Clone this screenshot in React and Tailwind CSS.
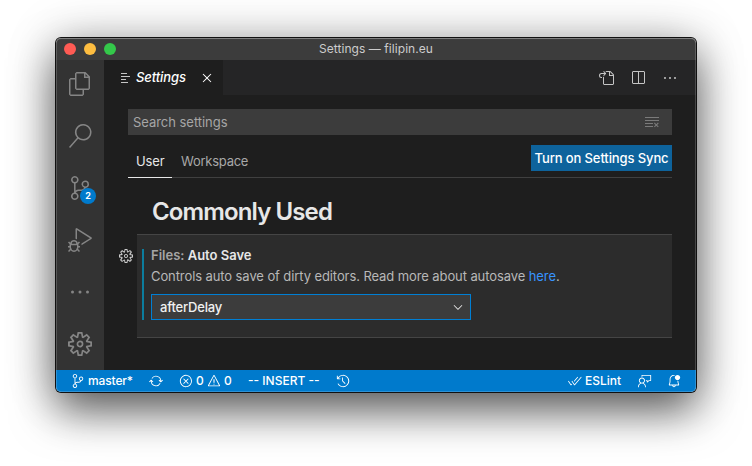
import {
  VscFiles, VscSearch, VscSourceControl, VscDebugAlt, VscEllipsis, VscSettingsGear, VscGear,
  VscSync, VscError, VscWarning, VscHistory, VscCheckAll, VscFeedback, VscBellDot,
  VscGoToFile, VscSplitHorizontal, VscClearAll, VscChevronDown, VscClose,
} from "react-icons/vsc";

function ActivityItem({ icon: Icon, badge }) {
  return (
    <div className="relative flex h-12 w-12 items-center justify-center text-[#858585]">
      <Icon size={24} />
      {badge && (
        <span className="absolute right-2 bottom-2 flex h-4 w-4 items-center justify-center rounded-full bg-[#007acc] text-[9px] font-bold text-white">
          {badge}
        </span>
      )}
    </div>
  );
}

function TitleBar() {
  return (
    <header className="relative flex h-[22px] items-center justify-center bg-[#3c3c3c]">
      <div className="absolute left-2 flex gap-2">
        <span className="h-3 w-3 rounded-full bg-[#ff5b54]" />
        <span className="h-3 w-3 rounded-full bg-[#fdbd40]" />
        <span className="h-3 w-3 rounded-full bg-[#34c84a]" />
      </div>
      <span className="text-[12px] tracking-[0.06px] text-[#cccccc]">Settings — filipin.eu</span>
    </header>
  );
}

function SettingsIcon() {
  return (
    <svg width="10" height="10" viewBox="0 0 10 10" className="text-[#c5c5c5]" stroke="currentColor">
      <path d="M0 .5h6M0 3.5h9M0 6.5h5M0 9.5h7" />
    </svg>
  );
}

function TabBar() {
  return (
    <div className="flex h-[35px] bg-[#252526]">
      <div className="flex w-[119px] items-center bg-[#1e1e1e] pl-[17px] text-white">
        <SettingsIcon />
        <span className="ml-[5px] w-[51px] text-[13px] font-medium tracking-[-0.1px] whitespace-nowrap italic">Settings</span>
        <VscClose size={16} className="ml-3" />
      </div>
      <div className="ml-auto flex items-center gap-4 pr-[18px] text-[#c5c5c5]">
        <VscGoToFile size={16} />
        <VscSplitHorizontal size={16} />
        <VscEllipsis size={16} />
      </div>
    </div>
  );
}

function Setting() {
  return (
    <div className="relative ml-[9px] h-[104px] border-y border-[#454545] bg-[#2c2c2c] pt-[14px] pl-[5px]">
      <VscGear size={16} className="absolute top-[13px] -left-[19px] text-[#cccccc]" />
      <div className="h-[71px] border-l-2 border-[#0c7d9d] pl-[7px] text-[13px]">
        <div className="h-[14px] leading-[12px] font-semibold text-[#a5a5a5]">
          Files: <span className="text-[#e7e7e7]">Auto Save</span>
        </div>
        <p className="mt-1 h-[18px] leading-[18px] tracking-[-0.095px] whitespace-nowrap text-[#b8b8b8]">
          Controls auto save of dirty editors. Read more about autosave <a className="text-[#3794ff]">here</a>.
        </p>
        <div className="mt-[9px] flex h-[26px] w-[320px] items-center justify-between border border-[#007fd4] bg-[#3c3c3c] pr-[5px] pl-2 text-[#f0f0f0]">
          <span className="pt-[2px] font-medium tracking-[-0.2px]">afterDelay</span>
          <VscChevronDown size={14} />
        </div>
      </div>
    </div>
  );
}

function Editor() {
  return (
    <main className="flex-1 bg-[#1e1e1e]">
      <TabBar />
      <div className="px-6 pt-[14px] text-[13px]">
        <div className="flex h-[26px] items-center justify-between bg-[#3c3c3c] pr-3 pl-[5px] text-[#a6a6a6]">
          <span className="pt-px tracking-[-0.04px]">Search settings</span>
          <VscClearAll size={16} className="text-[#7b7b7b]" />
        </div>
        <div className="flex h-[43px] justify-between border-b border-[#404040]">
          <div className="flex pt-[10px]">
            <span className="z-10 h-[33px] w-11 border-b border-[#e7e7e7] pl-2 leading-[32px] tracking-[-0.1px] text-[#e7e7e7]">User</span>
            <span className="pl-[9px] leading-[32px] tracking-[-0.25px] text-[#a8a8a8]">Workspace</span>
          </div>
          <button className="mt-[10px] h-[26px] w-[141px] bg-[#0e639c] pt-px font-medium tracking-[-0.11px] whitespace-nowrap text-white">Turn on Settings Sync</button>
        </div>
        <h2 className="h-[56px] pt-[19px] pl-6 text-[24px] leading-[30px] font-semibold tracking-[-0.88px] text-[#e7e7e7]">Commonly Used</h2>
        <Setting />
      </div>
    </main>
  );
}

function StatusBar() {
  return (
    <footer className="flex h-[22px] items-center bg-[#007acc] pr-[15px] pl-[15px] text-[12px] font-medium text-white">
      <VscSourceControl size={14} />
      <span className="ml-[3px] w-[45px] tracking-[-0.12px]">master*</span>
      <VscSync size={14} className="ml-4" />
      <VscError size={14} className="ml-4" />
      <span className="ml-[3px] w-2">0</span>
      <VscWarning size={14} className="ml-[3px]" />
      <span className="ml-[3px] w-2">0</span>
      <span className="ml-4 w-[72px] whitespace-nowrap">-- INSERT --</span>
      <VscHistory size={14} className="ml-4" />
      <VscCheckAll size={14} className="ml-auto" />
      <span className="ml-[3px] w-[37px]">ESLint</span>
      <VscFeedback size={14} className="ml-4" />
      <VscBellDot size={14} className="ml-[15px]" />
    </footer>
  );
}

export default function App() {
  return (
    <div className="h-[466px] w-[752px] overflow-hidden bg-white pt-[38px] pl-[56px] font-['Inter','Liberation_Sans',sans-serif]">
      <div className="h-[354px] w-[640px] rounded-[5px] shadow-[0_0_0_1px_#111,0_19px_44px_rgba(0,0,0,0.6),0_0_50px_rgba(0,0,0,0.22)]">
        <div className="relative flex h-full flex-col overflow-hidden rounded-[5px]">
          <TitleBar />
          <div className="flex flex-1">
            <nav className="flex w-12 flex-col gap-1 bg-[#333333]">
              <ActivityItem icon={VscFiles} />
              <ActivityItem icon={VscSearch} />
              <ActivityItem icon={VscSourceControl} badge="2" />
              <ActivityItem icon={VscDebugAlt} />
              <ActivityItem icon={VscEllipsis} />
              <ActivityItem icon={VscSettingsGear} />
            </nav>
            <Editor />
          </div>
          <StatusBar />
          <div className="pointer-events-none absolute inset-0 z-20 rounded-[5px] shadow-[inset_0_0_0_1px_rgba(255,255,255,0.18),inset_0_1px_0_rgba(255,255,255,0.2)]" />
        </div>
      </div>
    </div>
  );
}
